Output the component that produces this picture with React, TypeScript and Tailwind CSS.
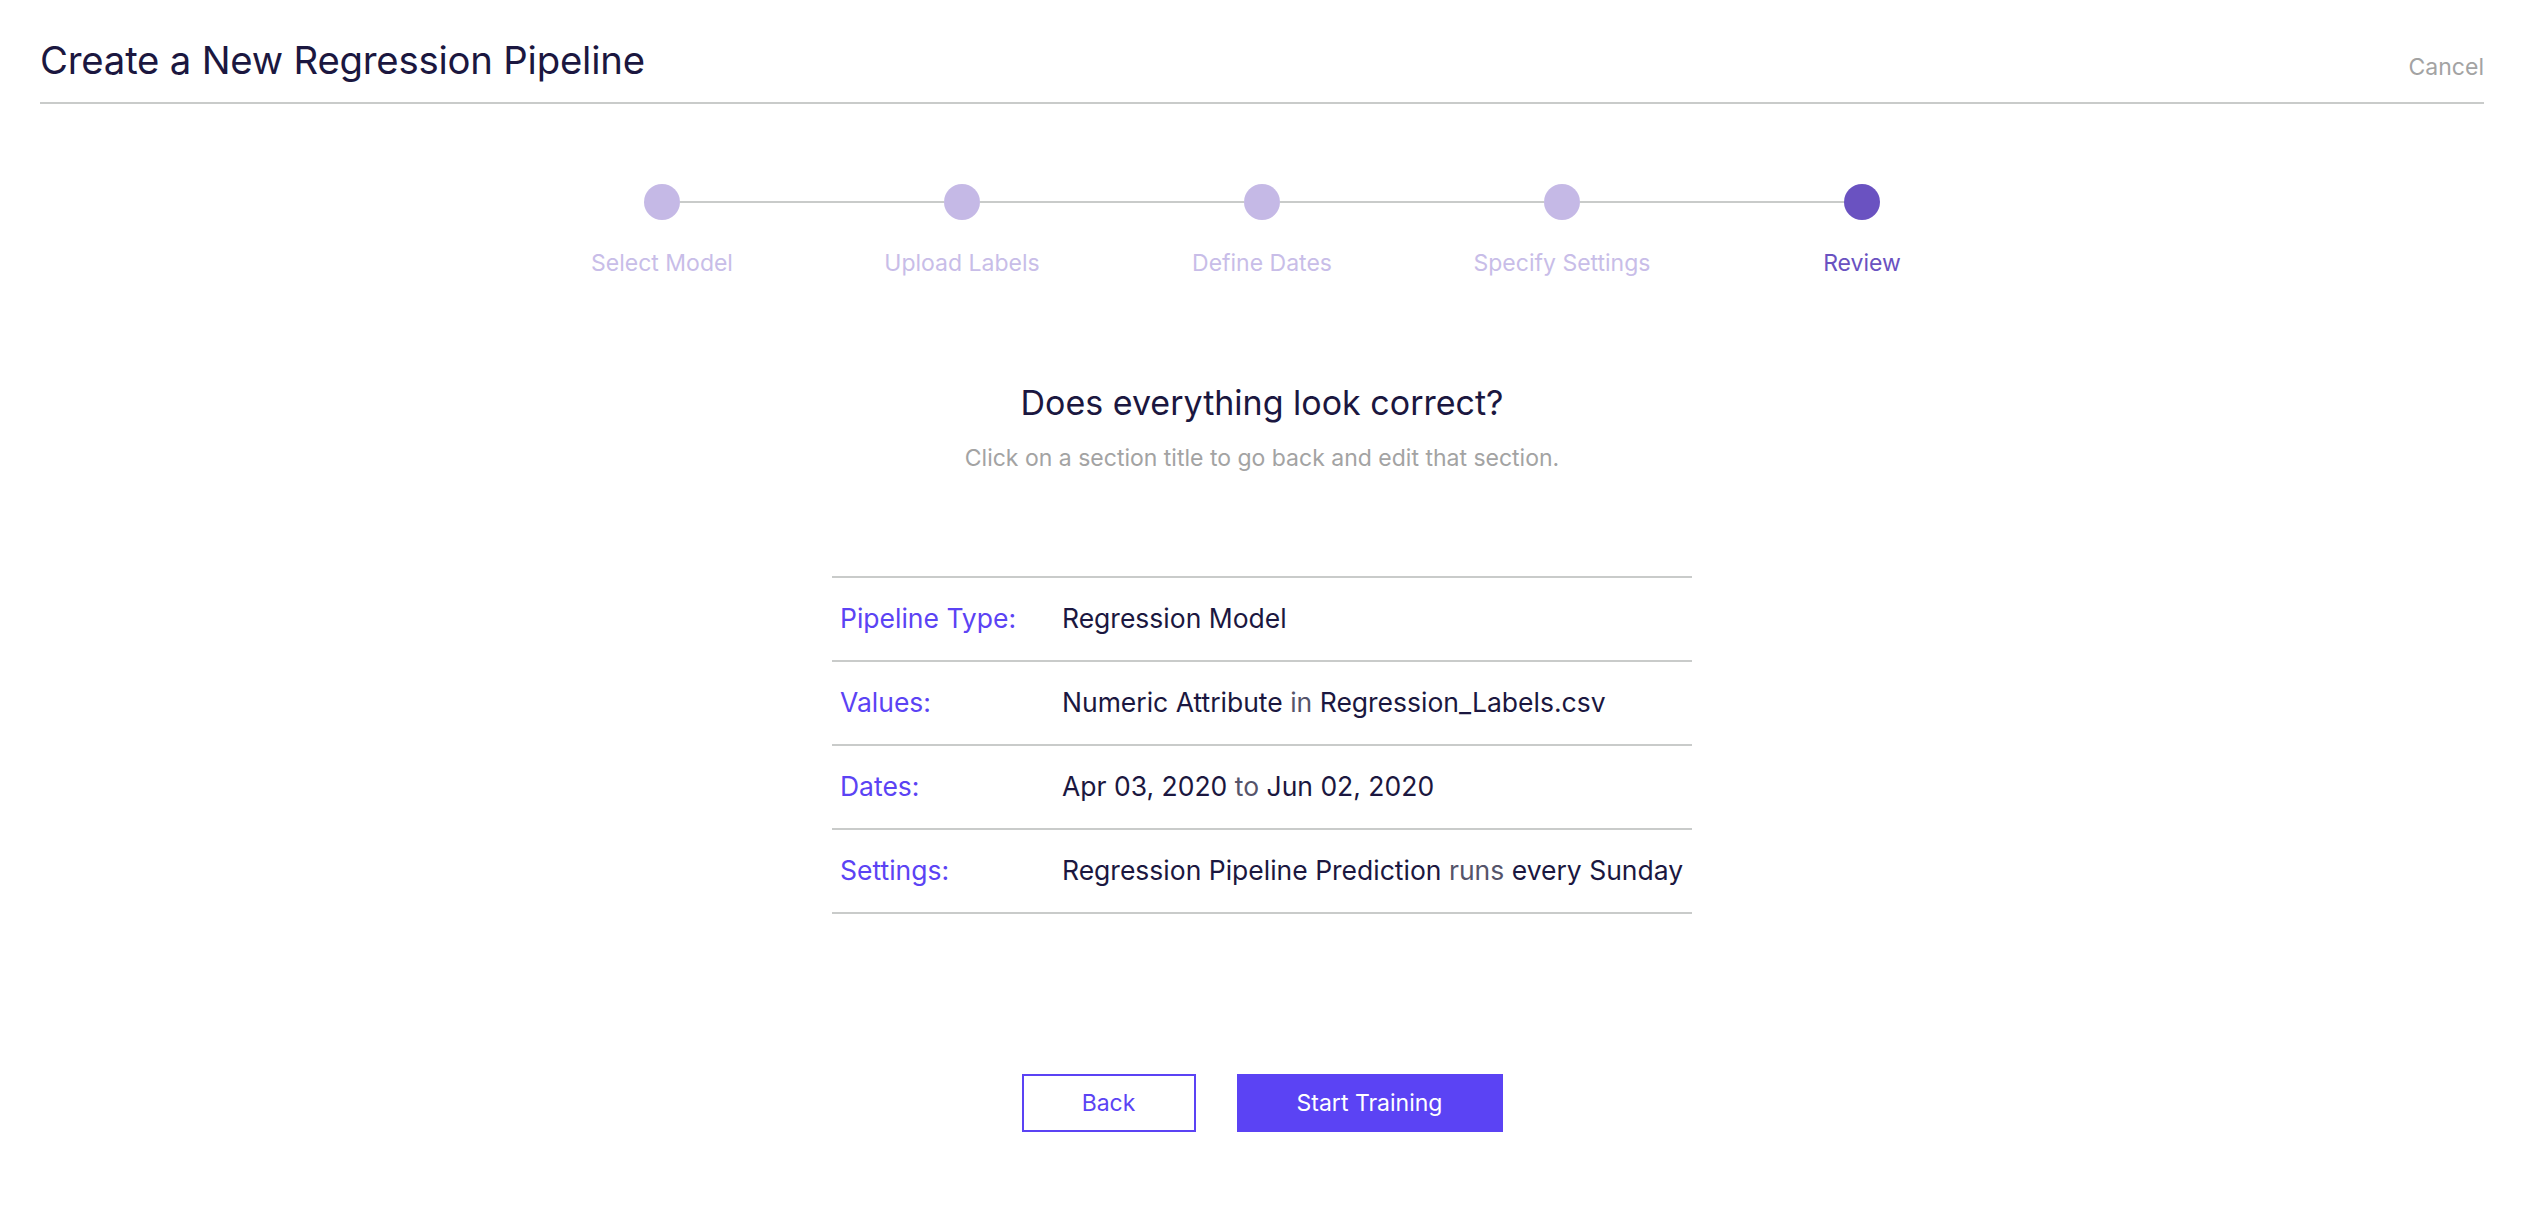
import React from "react";

const steps = ["Select Model", "Upload Labels", "Define Dates", "Specify Settings", "Review"];

function Row({ label, children }: { label: string; children: React.ReactNode }) {
  return (
    <div className="flex h-[84px] items-center border-b-2 border-[#c9cbca]">
      <div className="w-[230px] pl-[8px] text-[26.5px] text-[#5b43f4]">{label}</div>
      <div className="text-[26.5px] text-[#1b1740]">{children}</div>
    </div>
  );
}

export default function App() {
  return (
    <div
      className="min-h-[1220px] w-full bg-white px-[40px]"
      style={{ fontFamily: "Inter, 'Noto Sans', sans-serif" }}
    >
      <div className="flex h-[104px] items-end justify-between border-b-2 border-[#c9cbca] pb-[23px]">
        <h1 className="text-[38.3px] font-normal leading-none tracking-[-0.2px] text-[#1b1740]">
          Create a New Regression Pipeline
        </h1>
        <button className="mb-[0px] text-[23px] leading-none text-[#a3a3a3]">Cancel</button>
      </div>

      <div className="mt-[80px] flex justify-center">
        {steps.map((s, i) => {
          const active = i === steps.length - 1;
          return (
            <div key={s} className="flex w-[300px] flex-col items-center">
              <div className="flex w-full items-center">
                <div className={`h-[2px] flex-1 ${i === 0 ? "bg-transparent" : "bg-[#c9cbca]"}`} />
                <div
                  className={`h-[36px] w-[36px] rounded-full ${active ? "bg-[#6a52c1]" : "bg-[#c5b9e6]"}`}
                />
                <div
                  className={`h-[2px] flex-1 ${i === steps.length - 1 ? "bg-transparent" : "bg-[#c9cbca]"}`}
                />
              </div>
              <div
                className={`mt-[32px] text-[23px] leading-none ${active ? "text-[#6a52c1]" : "text-[#c8bde8]"}`}
              >
                {s}
              </div>
            </div>
          );
        })}
      </div>

      <div className="mt-[111px] text-center text-[34px] leading-none text-[#1b1740]">
        Does everything look correct?
      </div>
      <div className="mt-[27px] text-center text-[23px] leading-none text-[#a3a3a3]">
        Click on a section title to go back and edit that section.
      </div>

      <div className="mx-auto mt-[106px] w-[860px] border-t-2 border-[#c9cbca]">
        <Row label="Pipeline Type:">Regression Model</Row>
        <Row label="Values:">
          Numeric Attribute <span className="text-[#55546a]">in</span> Regression_Labels.csv
        </Row>
        <Row label="Dates:">
          Apr 03, 2020 <span className="text-[#55546a]">to</span> Jun 02, 2020
        </Row>
        <Row label="Settings:">
          Regression Pipeline Prediction <span className="text-[#55546a]">runs</span> every Sunday
        </Row>
      </div>

      <div className="mt-[160px] flex justify-center gap-[41px]">
        <button className="h-[58px] w-[174px] border-2 border-[#5b43f4] text-[23px] text-[#5b43f4]">
          Back
        </button>
        <button className="h-[58px] w-[266px] bg-[#5b43f4] text-[23px] text-white">Start Training</button>
      </div>
    </div>
  );
}
